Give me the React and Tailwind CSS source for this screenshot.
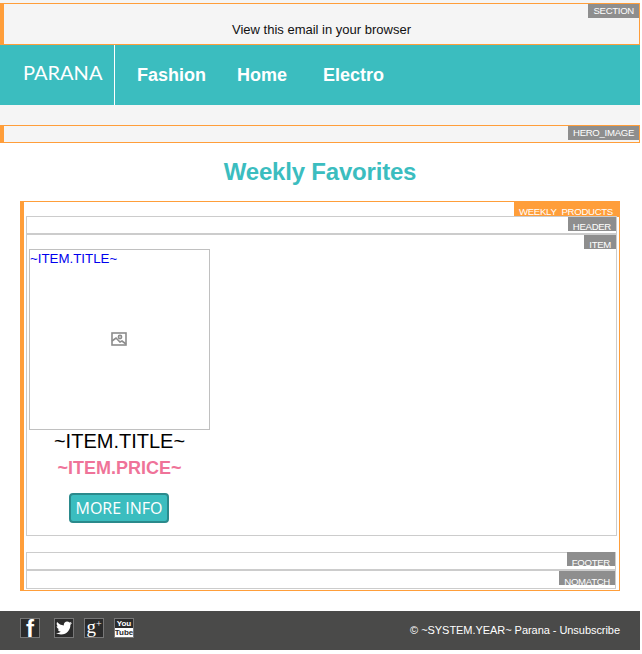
import { FaTwitter } from 'react-icons/fa'

const Tag = ({ label, className = '' }) => (
  <div className={`absolute right-0 h-[14px] overflow-hidden bg-[#8e8e8e] px-[5px] text-[9.6px] tracking-[-0.3px] whitespace-nowrap text-white ${className}`}>
    {label}
  </div>
)

const SocialBox = ({ children, className = '' }) => (
  <div className={`flex h-5 w-5 items-center justify-center overflow-hidden border border-[#777777] bg-[#2b2b2b] text-white ${className}`}>
    {children}
  </div>
)

const BrokenImage = () => (
  <svg width="16" height="14" viewBox="0 0 16 14" fill="none" stroke="#8c8c8c" strokeWidth="1.6">
    <rect x="1" y="1" width="14" height="12" />
    <circle cx="9" cy="5" r="1.6" />
    <path d="M1 9l4-3 4 4 2-1 4 3" />
  </svg>
)

export default function App() {
  return (
    <div className="w-[640px] bg-white font-['Liberation_Sans',Arial,sans-serif]">
      <div className="bg-[#f5f5f5] pt-[3px] pb-5">
        {/* section preheader */}
        <div className="relative h-[42px] border border-l-4 border-[#ff9e3a] pt-[18px] text-center text-[13px] leading-[15px] text-[#111111]">
          <Tag label="SECTION" className="top-0 leading-[14px]" />
          View this email in your browser
        </div>

        {/* nav */}
        <div className="flex h-[60px] bg-[#3bbdbf] text-white">
          <div className="flex w-[115px] items-center border-r border-white pb-[6px] pl-[23px] font-['Lato',sans-serif] text-[20px]">
            PARANA
          </div>
          <nav className="flex items-center pl-[22px] text-lg font-bold">
            <span className="w-[100px]">Fashion</span>
            <span className="w-[86px]">Home</span>
            <span>Electro</span>
          </nav>
        </div>
      </div>

      <div className="relative h-[18px] border border-l-4 border-[#ff9e3a] bg-[#f5f5f5]">
        <Tag label="HERO_IMAGE" className="top-0 leading-[14px]" />
      </div>

      <h1 className="mt-[14px] mb-[14px] text-center text-2xl leading-[30px] font-bold tracking-[-0.2px] text-[#3bbdbf]">Weekly Favorites</h1>

      {/* products section */}
      <div className="relative mx-5 h-[390px] border border-l-4 border-[#ff9e3a] pt-[14px]">
        <div className="absolute top-[-1px] right-[-1px] h-4 w-[106px] overflow-hidden bg-[#ff9e3a] pl-[5px] text-[9.6px] leading-[22px] tracking-[-0.3px] whitespace-nowrap text-white">
          WEEKLY_PRODUCTS
        </div>

        <div className="relative mx-[2px] h-[18px] border border-[#cccccc]">
          <Tag label="HEADER" className="top-0 leading-[20px]" />
        </div>

        <div className="relative mx-[2px] h-[302px] border border-[#cccccc] pt-[14px] pl-[2px]">
          <Tag label="ITEM" className="top-0 leading-[20px]" />
          <div className="w-[181px]">
            <div className="relative h-[181px] border border-[#c0c0c0] pt-[1px] text-[13.3px] leading-[15px] text-[#0000ee]">
              ~ITEM.TITLE~
              <div className="absolute inset-0 flex items-center justify-center pr-[1px] pb-[2px]">
                <BrokenImage />
              </div>
            </div>
            <div className="mt-[1px] text-center text-xl leading-[20px] text-black">~ITEM.TITLE~</div>
            <div className="mt-[7px] text-center text-lg leading-[20px] font-bold text-[#ef7399]">~ITEM.PRICE~</div>
            <div className="mt-[15px] flex justify-center pr-[1px]">
              <button className="h-[30px] w-[100px] rounded border-2 border-[#2b8a8c] bg-[#3bbdbf] font-['Open_Sans',sans-serif] text-[16px] text-white">
                MORE INFO
              </button>
            </div>
          </div>
        </div>

        <div className="relative mt-[16px] mr-[3px] ml-[2px] h-[18px] border border-[#cccccc]">
          <Tag label="FOOTER" className="top-[-1px] leading-[22px]" />
        </div>
        <div className="relative mr-[3px] ml-[2px] h-[19px] border border-[#cccccc]">
          <Tag label="NOMATCH" className="top-0 leading-[21px]" />
        </div>
      </div>

      {/* footer */}
      <div className="mt-5 flex h-[39px] items-center justify-between bg-[#4a4a49] px-5 text-[11px] tracking-[-0.05px] text-white">
        <div className="mb-[5px] flex items-center">
          <SocialBox className="pt-[2px] text-[24px] leading-none font-bold">f</SocialBox>
          <SocialBox className="ml-[14px] text-[16px]"><FaTwitter /></SocialBox>
          <SocialBox className="ml-[10px] items-start font-['Liberation_Serif',serif] text-[19px] leading-[16px]">
            g<span className="text-[10px] leading-[10px]">+</span>
          </SocialBox>
          <SocialBox className="ml-[10px] flex-col text-[8px] leading-[9px] font-bold">
            <span>You</span>
            <span className="bg-white px-[1px] text-[#2b2b2b]">Tube</span>
          </SocialBox>
        </div>
        <span>© ~SYSTEM.YEAR~ Parana - Unsubscribe</span>
      </div>
    </div>
  )
}
